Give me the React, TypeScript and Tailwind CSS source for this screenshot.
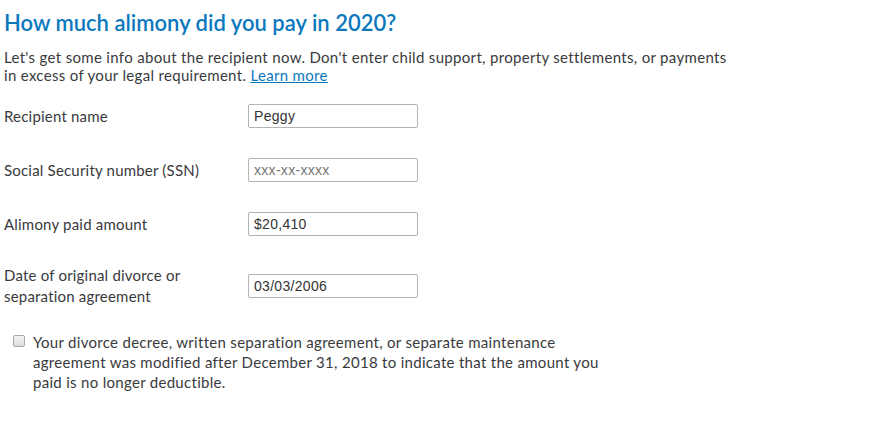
import React from "react";

const font = { fontFamily: "Lato, 'Noto Sans', sans-serif" };

function Row({ label, value, placeholder, h }: { label: React.ReactNode; value?: string; placeholder?: string; h: string }) {
  return (
    <div className={`flex items-center ${h}`}>
      <div className="w-[244px] text-[15px] leading-[21px] tracking-[0.2px] text-[#393a3d]">{label}</div>
      <input
        readOnly
        value={value ?? ""}
        placeholder={placeholder}
        className="h-[24px] w-[170px] rounded-[2px] border border-[#b4b4b4] bg-white px-[5px] text-[14px] tracking-[0.3px] text-[#333] placeholder:text-[#777] outline-none [font-family:'Liberation_Sans',Arial,sans-serif]"
      />
    </div>
  );
}

export default function App() {
  return (
    <div className="min-h-[421px] w-[884px] bg-white pl-[4px] pt-[9px] text-[#393a3d]" style={font}>
      <h1 className="text-[22px] font-semibold leading-[28px] text-[#0b78be]">How much alimony did you pay in 2020?</h1>
      <p className="mt-[11px] w-[728px] text-[15px] leading-[18px] tracking-[0.32px]">
        Let's get some info about the recipient now. Don't enter child support, property settlements, or payments in
        excess of your legal requirement. <a className="text-[#0b78be] underline">Learn more</a>
      </p>
      <div className="mt-[20px] flex flex-col gap-[30px]">
        <Row label="Recipient name" value="Peggy" h="h-[24px]" />
        <Row label="Social Security number (SSN)" placeholder="xxx-xx-xxxx" h="h-[24px]" />
        <Row label="Alimony paid amount" value="$20,410" h="h-[24px]" />
        <Row
          label={
            <>
              Date of original divorce or
              <br />
              separation agreement
            </>
          }
          value="03/03/2006"
          h="h-[40px]"
        />
      </div>
      <label className="mt-[26px] ml-[9px] flex items-start gap-[8px]">
        <span className="mt-[3px] h-[12px] w-[12px] shrink-0 rounded-[2px] border border-[#a8a8a8] bg-gradient-to-b from-[#f4f4f4] to-[#dcdcdc]" />
        <span className="w-[578px] text-[15px] leading-[20px] tracking-[0.3px]">
          Your divorce decree, written separation agreement, or separate maintenance agreement was modified after
          December 31, 2018 to indicate that the amount you paid is no longer deductible.
        </span>
      </label>
    </div>
  );
}
